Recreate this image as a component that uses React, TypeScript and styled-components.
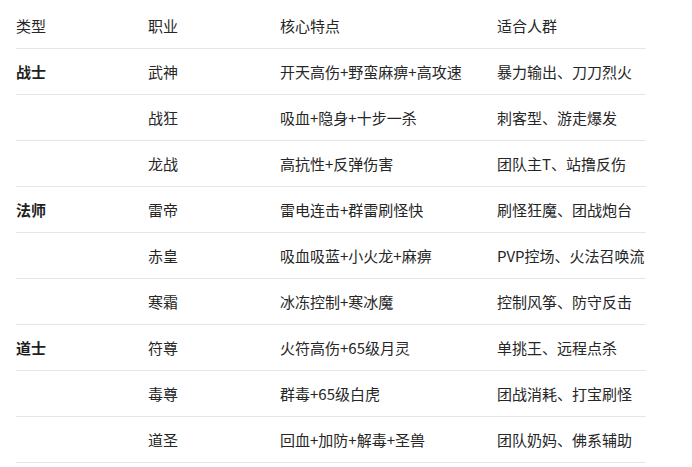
import { Fragment } from "react";
import styled, { createGlobalStyle } from "styled-components";

const GlobalStyle = createGlobalStyle`
  body {
    margin: 0;
    background: #ffffff;
    font-family: "Noto Sans CJK SC", "Noto Sans", sans-serif;
    color: #262626;
  }
`;

const Page = styled.div`
  padding: 3px 16px 0 16px;
`;

const Table = styled.div`
  display: grid;
  grid-template-columns: 132px 132px 217px 149px;
  width: 630px;
`;

const Cell = styled.div<{ $bold?: boolean }>`
  height: 45px;
  display: flex;
  align-items: center;
  border-bottom: 1px solid #e6e6e6;
  font-size: 15px;
  white-space: nowrap;
  font-weight: ${(p) => (p.$bold ? 600 : 400)};
  color: ${(p) => (p.$bold ? "#1f1f1f" : "#262626")};
`;

interface Row {
  type: string;
  job: string;
  core: string;
  fit: string;
}

const rows: Row[] = [
  { type: "战士", job: "武神", core: "开天高伤+野蛮麻痹+高攻速", fit: "暴力输出、刀刀烈火" },
  { type: "", job: "战狂", core: "吸血+隐身+十步一杀", fit: "刺客型、游走爆发" },
  { type: "", job: "龙战", core: "高抗性+反弹伤害", fit: "团队主T、站撸反伤" },
  { type: "法师", job: "雷帝", core: "雷电连击+群雷刷怪快", fit: "刷怪狂魔、团战炮台" },
  { type: "", job: "赤皇", core: "吸血吸蓝+小火龙+麻痹", fit: "PVP控场、火法召唤流" },
  { type: "", job: "寒霜", core: "冰冻控制+寒冰魔", fit: "控制风筝、防守反击" },
  { type: "道士", job: "符尊", core: "火符高伤+65级月灵", fit: "单挑王、远程点杀" },
  { type: "", job: "毒尊", core: "群毒+65级白虎", fit: "团战消耗、打宝刷怪" },
  { type: "", job: "道圣", core: "回血+加防+解毒+圣兽", fit: "团队奶妈、佛系辅助" },
];

function App() {
  return (
    <>
      <GlobalStyle />
      <Page>
        <Table>
          <Cell>类型</Cell>
          <Cell>职业</Cell>
          <Cell>核心特点</Cell>
          <Cell>适合人群</Cell>
          {rows.map((r) => (
            <Fragment key={r.job}>
              <Cell $bold>{r.type}</Cell>
              <Cell>{r.job}</Cell>
              <Cell>{r.core}</Cell>
              <Cell>{r.fit}</Cell>
            </Fragment>
          ))}
        </Table>
      </Page>
    </>
  );
}

export default App;
